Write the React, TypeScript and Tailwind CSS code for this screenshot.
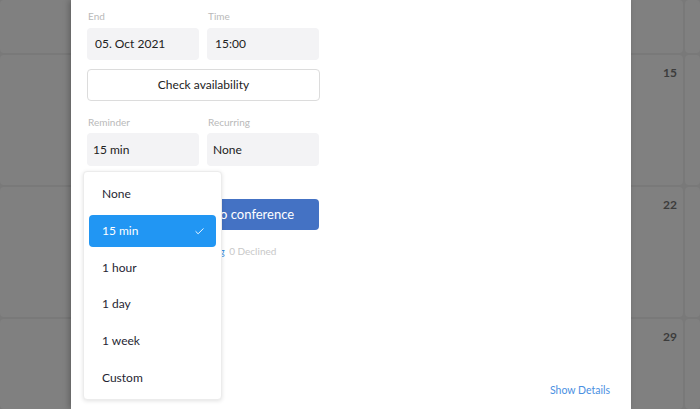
import { Check, Video } from "lucide-react";

const OPTIONS = ["None", "15 min", "1 hour", "1 day", "1 week", "Custom"];

function Field({ label, value }: { label: string; value: string }) {
  return (
    <div className="w-[112px]">
      <p className="text-[10px] leading-[12px] text-[#b9b9b9] mb-[6px] pl-px">{label}</p>
      <div className="h-[32px] rounded bg-[#f3f3f5] px-2 flex items-center text-[12px] text-[#222]">
        {value}
      </div>
    </div>
  );
}

export default function App() {
  return (
    <div
      className="relative w-[700px] h-[409px] overflow-hidden bg-[#797979]"
      style={{ fontFamily: "Lato, 'Open Sans', sans-serif" }}
    >
      {/* dimmed calendar behind */}
      <div className="grid grid-cols-[683px_1fr] grid-rows-[53px_130px_130px_1fr] gap-[2px] h-full">
        <div className="bg-[#808080] rounded-sm" />
        <div className="bg-[#808080] rounded-sm" />
        {["15", "22", "29"].map((n) => (
          <>
            <div key={n} className="bg-[#808080] rounded-sm flex justify-end pt-[9px] pr-[6px]">
              <span className="text-[12px] font-bold text-[#3c3c3c]">{n}</span>
            </div>
            <div key={n + "b"} className="bg-[#808080] rounded-sm" />
          </>
        ))}
      </div>

      {/* modal */}
      <div className="absolute left-[71px] top-0 w-[560px] h-[409px] bg-white shadow-[-2px_0_6px_rgba(0,0,0,0.25)] flex flex-col px-4 pt-[10px]">
        <div className="flex gap-2">
          <Field label="End" value="05. Oct 2021" />
          <Field label="Time" value="15:00" />
        </div>
        <button className="mt-[9px] w-[233px] h-[32px] rounded border border-[#dcdcdc] bg-white text-[12px] text-[#222]">
          Check availability
        </button>
        <div className="flex gap-2 mt-[15px]">
          <div className="w-[112px]">
            <p className="text-[10px] leading-[12px] text-[#b9b9b9] mb-[5px] pl-px">Reminder</p>
            <div className="h-[33px] rounded bg-[#f3f3f5] px-[6px] flex items-center text-[12px] text-[#222]">
              15 min
            </div>
          </div>
          <div className="w-[112px]">
            <p className="text-[10px] leading-[12px] text-[#b9b9b9] mb-[5px] pl-px">Recurring</p>
            <div className="h-[33px] rounded bg-[#f3f3f5] px-[6px] flex items-center text-[12px] text-[#222]">
              None
            </div>
          </div>
        </div>
        <button className="mt-[33px] w-[232px] h-[31px] rounded bg-[#4472c4] text-white text-[13px] flex items-center justify-center gap-2 pl-[36px]">
          <Video size={14} />
          Add video conference
        </button>
        <p className="mt-[15px] text-[10px] leading-[12px] text-[#c8c8c8] pl-[42px]">
          <span className="text-[#3b8de0]">1 Accepted</span> <span className="text-[#3b8de0]">1 Pending</span>{" "}
          <span className="ml-[2px]">0 Declined</span>
        </p>
        <div className="mt-auto mb-[10px] flex justify-end pr-[5px]">
          <span className="text-[10.5px] text-[#4a90e2]">Show Details</span>
        </div>
      </div>

      {/* reminder dropdown */}
      <div className="absolute left-[83px] top-[171px] w-[139px] h-[229px] bg-white rounded border border-[#ececec] shadow-[0_1px_4px_rgba(0,0,0,0.12)] px-[5px] pt-[6px] pb-[5px] flex flex-col gap-[4px]">
        {OPTIONS.map((o) => {
          const active = o === "15 min";
          return (
            <div
              key={o}
              className={
                active
                  ? "h-[33px] rounded bg-[#2196f3] text-white pl-[13px] pr-[11px] flex items-center justify-between text-[12px]"
                  : "h-[33px] rounded text-[#1f1f33] pl-[13px] pr-[11px] flex items-center text-[12px]"
              }
            >
              <span>{o}</span>
              {active && <Check size={11} strokeWidth={2} />}
            </div>
          );
        })}
      </div>
    </div>
  );
}
